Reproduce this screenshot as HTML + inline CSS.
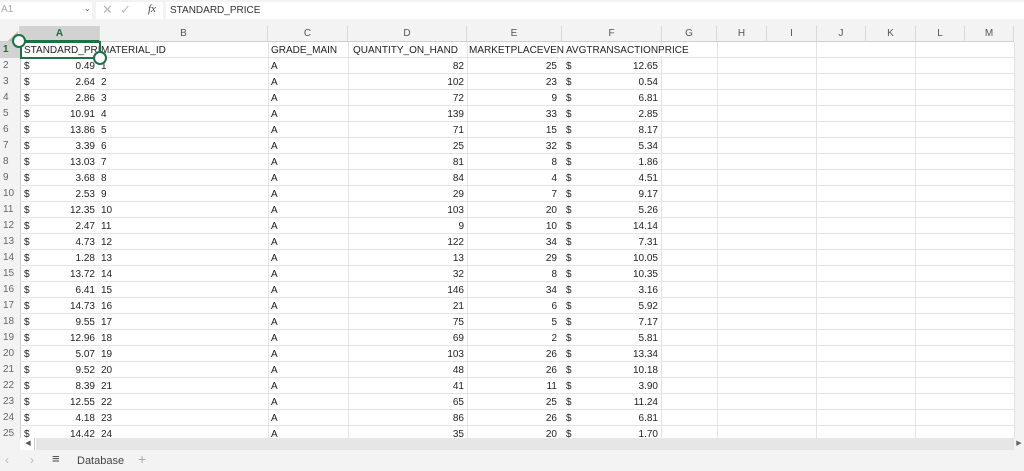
<!DOCTYPE html><html><head><style>
*{margin:0;padding:0;box-sizing:border-box}
body{width:1024px;height:471px;overflow:hidden;background:#fff;font-family:"Liberation Sans",sans-serif;font-size:10px;color:#222;position:relative}
.a{position:absolute}
.r{position:absolute;left:0;width:1014px;height:16px;border-bottom:1px solid #e3e3e3}
.r span{position:absolute;top:3px;white-space:nowrap}
.n{left:0;width:20px;height:16px;background:#f3f3f3;color:#666;padding-left:3px;top:0!important;line-height:16px}
.ra{text-align:right}
.vl{position:absolute;top:42px;height:396px;width:1px;background:#e3e3e3}
.h{position:absolute;top:26px;height:16px;text-align:center;color:#555;line-height:16px;border-right:1px solid #d8d8d8;background:#f3f3f3;border-bottom:1px solid #cfcfcf}
</style></head><body>
<div class="a" style="left:0;top:0;width:1024px;height:24px;background:#f3f3f3"></div>
<div class="a" style="left:0;top:2px;width:92px;height:17px;background:#fff;color:#aaa;padding:2px 0 0 1px">A1</div>
<div class="a" style="left:84px;top:4px;color:#666;font-size:8px">⌄</div>
<div class="a" style="left:96px;top:2px;width:67px;height:17px;background:#fff;color:#bbb;font-size:13px;padding-left:6px;line-height:16px">✕ &nbsp;✓</div>
<div class="a" style="left:148px;top:3px;color:#444;font-style:italic;font-family:'Liberation Serif',serif;font-size:11px">fx</div>
<div class="a" style="left:166px;top:2px;width:858px;height:17px;background:#fff;padding:3px 0 0 4px;color:#333">STANDARD_PRICE</div>
<div class="a" style="left:0;top:24px;width:1024px;height:2px;background:#f3f3f3"></div>
<div class="h" style="left:0;width:20px"></div>
<div class="a" style="left:8px;top:31px;width:0;height:0;border-left:10px solid transparent;border-bottom:10px solid #bbb"></div>
<div class="h" style="left:20px;width:80px;background:#d2d2d2;color:#1e6b3a;font-weight:bold;border-bottom:2px solid #1e7145">A</div>
<div class="h" style="left:100px;width:168px">B</div>
<div class="h" style="left:268px;width:80px">C</div>
<div class="h" style="left:348px;width:119px">D</div>
<div class="h" style="left:467px;width:95px">E</div>
<div class="h" style="left:562px;width:100px">F</div>
<div class="h" style="left:662px;width:55px">G</div>
<div class="h" style="left:717px;width:50px">H</div>
<div class="h" style="left:767px;width:50px">I</div>
<div class="h" style="left:817px;width:49px">J</div>
<div class="h" style="left:866px;width:50px">K</div>
<div class="h" style="left:916px;width:49px">L</div>
<div class="h" style="left:965px;width:49px">M</div>
<div class="h" style="left:1014px;width:10px;border:none"></div>
<div class="a" style="left:1014px;top:42px;width:10px;height:396px;background:#f3f3f3"></div>
<div class="vl" style="left:20px;background:#cfcfcf"></div>
<div class="vl" style="left:268px"></div><div class="vl" style="left:348px"></div><div class="vl" style="left:467px"></div><div class="vl" style="left:661px"></div><div class="vl" style="left:717px"></div><div class="vl" style="left:816px"></div><div class="vl" style="left:915px"></div><div class="vl" style="left:1014px"></div>
<div id="rows"></div>
<div class="r" style="top:42px"><span class="n" style="color:#1e6b3a;font-weight:bold;background:#d2d2d2">1</span><span style="left:24px">STANDARD_PRI</span><span style="left:101px">MATERIAL_ID</span><span style="left:271px">GRADE_MAIN</span><span style="left:353px">QUANTITY_ON_HAND</span><span style="left:469px">MARKETPLACEVENI</span><span style="left:564px;background:#fff;padding-left:2px">AVGTRANSACTIONPRICE</span></div>
<div class="a" style="left:20px;top:41px;width:81px;height:18px;border:2px solid #1e7145"></div>
<div class="a" style="left:12px;top:34px;width:14px;height:14px;border-radius:50%;border:2px solid #1e7145;background:#fff"></div>
<div class="a" style="left:93px;top:51px;width:14px;height:14px;border-radius:50%;border:2px solid #1e7145;background:#fff"></div>
<script>
var d=[[0.49,1,82,25,"12.65"],[2.64,2,102,23,"0.54"],[2.86,3,72,9,"6.81"],[10.91,4,139,33,"2.85"],[13.86,5,71,15,"8.17"],[3.39,6,25,32,"5.34"],[13.03,7,81,8,"1.86"],[3.68,8,84,4,"4.51"],[2.53,9,29,7,"9.17"],[12.35,10,103,20,"5.26"],[2.47,11,9,10,"14.14"],[4.73,12,122,34,"7.31"],[1.28,13,13,29,"10.05"],[13.72,14,32,8,"10.35"],[6.41,15,146,34,"3.16"],[14.73,16,21,6,"5.92"],[9.55,17,75,5,"7.17"],[12.96,18,69,2,"5.81"],[5.07,19,103,26,"13.34"],[9.52,20,48,26,"10.18"],[8.39,21,41,11,"3.90"],[12.55,22,65,25,"11.24"],[4.18,23,86,26,"6.81"],[14.42,24,35,20,"1.70"]];
var h="";d.forEach(function(x,i){var t=58+i*16;h+='<div class="r" style="top:'+t+'px"><span class="n">'+(i+2)+'</span><span style="left:24px">$</span><span class="ra" style="left:40px;width:55px">'+x[0].toFixed(2)+'</span><span style="left:101px">'+x[1]+'</span><span style="left:271px">A</span><span class="ra" style="left:400px;width:64px">'+x[2]+'</span><span class="ra" style="left:500px;width:57px">'+x[3]+'</span><span style="left:566px">$</span><span class="ra" style="left:600px;width:58px">'+x[4]+'</span></div>';});
document.getElementById("rows").innerHTML=h;
</script>
<div class="a" style="left:0;top:438px;width:1024px;height:12px;background:#fff"></div>
<div class="a" style="left:0;top:438px;width:20px;height:12px;background:#f3f3f3"></div>
<div class="a" style="left:22px;top:438px;width:13px;height:12px;border-right:1px solid #ccc;color:#555;font-size:7px;line-height:12px;text-align:center">◀</div>
<div class="a" style="left:36px;top:438px;width:978px;height:12px;background:#e6e6e6"></div>
<div class="a" style="left:1014px;top:438px;width:10px;height:12px;color:#666;font-size:7px;line-height:12px;text-align:center;background:#f3f3f3">▶</div>
<div class="a" style="left:0;top:450px;width:1024px;height:21px;background:#f3f3f3"></div>
<div class="a" style="left:5px;top:453px;color:#bbb;font-size:12px">‹</div>
<div class="a" style="left:30px;top:453px;color:#bbb;font-size:12px">›</div>
<div class="a" style="left:52px;top:451px;color:#444;font-size:13px">≡</div>
<div class="a" style="left:77px;top:455px;color:#444;font-size:11px">Database</div>
<div class="a" style="left:138px;top:451px;color:#aaa;font-size:14px">+</div>
</body></html>
